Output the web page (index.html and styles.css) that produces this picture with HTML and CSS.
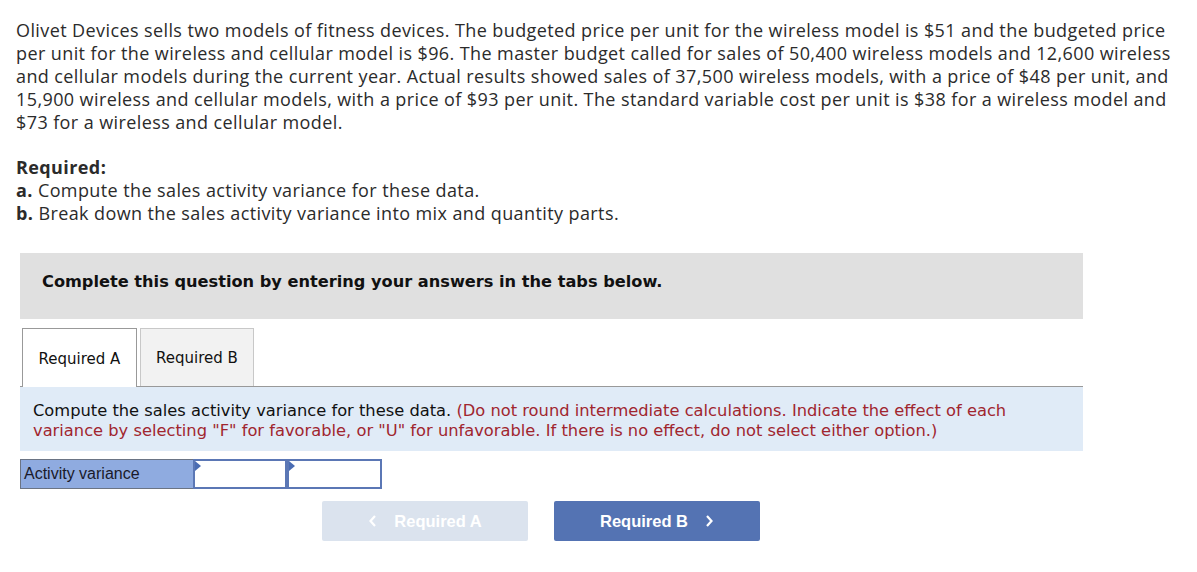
FILE: index.html
```html
<!DOCTYPE html>
<html>
<head>
<meta charset="utf-8">
<link rel="stylesheet" href="styles.css">
</head>
<body>
<div class="page">
  <p class="intro">Olivet Devices sells two models of fitness devices. The budgeted price per unit for the wireless model is $51 and the budgeted price<br>per unit for the wireless and cellular model is $96. The master budget called for sales of 50,400 wireless models and 12,600 wireless<br>and cellular models during the current year. Actual results showed sales of 37,500 wireless models, with a price of $48 per unit, and<br>15,900 wireless and cellular models, with a price of $93 per unit. The standard variable cost per unit is $38 for a wireless model and<br>$73 for a wireless and cellular model.</p>
  <div class="required">
    <div class="req-title">Required:</div>
    <div><b>a.</b> Compute the sales activity variance for these data.</div>
    <div><b>b.</b> Break down the sales activity variance into mix and quantity parts.</div>
  </div>

  <div class="question">
    <div class="banner">Complete this question by entering your answers in the tabs below.</div>
    <div class="tabs">
      <div class="tab active">Required A</div>
      <div class="tab">Required B</div>
    </div>
    <div class="instructions">Compute the sales activity variance for these data. <span class="note">(Do not round intermediate calculations. Indicate the effect of each<br>variance by selecting "F" for favorable, or "U" for unfavorable. If there is no effect, do not select either option.)</span></div>
    <div class="answer-row">
      <div class="label-cell">Activity variance</div>
      <div class="input-cell"><span class="marker"></span></div>
      <div class="input-cell"><span class="marker"></span></div>
    </div>
    <div class="nav">
      <button class="nav-btn prev">
        <svg width="10" height="14" viewBox="0 0 10 14"><polyline points="7,2 2.5,7 7,12" fill="none" stroke="#fff" stroke-width="2.2"/></svg>
        <span>Required A</span>
      </button>
      <button class="nav-btn next">
        <span>Required B</span>
        <svg width="10" height="14" viewBox="0 0 10 14"><polyline points="3,2 7.5,7 3,12" fill="none" stroke="#fff" stroke-width="2.2"/></svg>
      </button>
    </div>
  </div>
</div>
</body>
</html>
```
FILE: styles.css
```css
html, body {
  margin: 0;
  padding: 0;
  background: #fff;
}
.page {
  padding: 19px 0 0 16px;
  font-family: "Open Sans", "Liberation Sans", sans-serif;
  color: #2b2b2b;
  font-size: 18px;
  line-height: 23px;
  letter-spacing: 0.4px;
}
.intro {
  margin: 0;
  white-space: nowrap;
}
.required {
  margin-top: 22px;
}
.req-title {
  font-weight: bold;
}
.question {
  margin-top: 28px;
  margin-left: 4px;
  width: 1063px;
  letter-spacing: 0;
}
.banner {
  background: #e0e0e0;
  height: 66px;
  box-sizing: border-box;
  padding: 18px 22px 0;
  font-family: "DejaVu Sans", sans-serif;
  font-weight: bold;
  font-size: 16.2px;
  line-height: 22px;
  color: #111;
}
.tabs {
  display: flex;
  gap: 3px;
  margin-top: 9px;
  padding-left: 2px;
  border-bottom: 1px solid #999;
  height: 58px;
}
.tab {
  width: 114px;
  height: 58px;
  box-sizing: border-box;
  border: 1px solid #c8c8c8;
  border-bottom: none;
  background: #f2f2f2;
  display: flex;
  align-items: center;
  justify-content: center;
  padding-top: 2px;
  font-family: "DejaVu Sans", sans-serif;
  font-size: 15px;
  color: #111;
}
.tab.active {
  background: #fff;
  border-color: #999;
  height: 59px;
  width: 115px;
}
.instructions {
  background: #e0ebf7;
  padding: 14px 13px 10px;
  font-family: "DejaVu Sans", sans-serif;
  font-size: 16.3px;
  line-height: 20px;
  color: #111;
}
.note {
  color: #a0262f;
}
.answer-row {
  display: flex;
  margin-top: 8px;
  height: 30px;
}
.label-cell {
  width: 173px;
  box-sizing: border-box;
  background: #8fabe0;
  border: 1px solid #6b7484;
  border-right: none;
  padding: 3px 0 0 3px;
  font-family: "Liberation Sans", Arial, sans-serif;
  font-size: 16px;
  line-height: 22px;
  color: #1a1a2a;
}
.input-cell {
  position: relative;
  width: 94px;
  box-sizing: border-box;
  background: #fff;
  border: 2px solid #5b77b5;
}
.input-cell + .input-cell {
  width: 95px;
}
.marker {
  position: absolute;
  left: 0;
  top: 0;
  width: 0;
  height: 0;
  border-top: 5px solid transparent;
  border-bottom: 5px solid transparent;
  border-left: 6px solid #4a6cb3;
}
.nav {
  display: flex;
  gap: 26px;
  margin-top: 12px;
  padding-left: 302px;
}
.nav-btn {
  width: 206px;
  height: 40px;
  border: none;
  border-radius: 2px;
  display: flex;
  align-items: center;
  justify-content: center;
  gap: 16px;
  font-family: "Liberation Sans", Arial, sans-serif;
  font-weight: bold;
  font-size: 16.5px;
  color: #fff;
  padding: 0;
}
.nav-btn.prev {
  background: #dbe3ee;
}
.nav-btn.next {
  background: #5473b3;
}
```
